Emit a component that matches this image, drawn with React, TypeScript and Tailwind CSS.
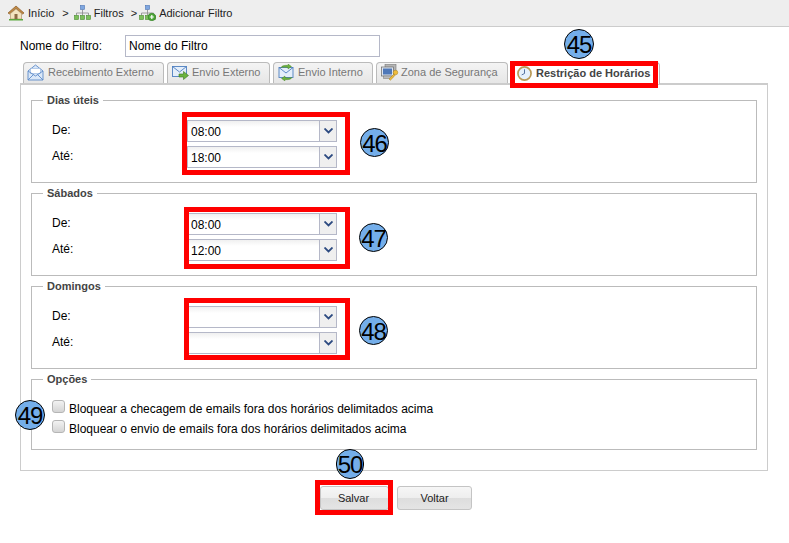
const font = "font-['Liberation_Sans',Arial,sans-serif]";

function HomeIcon() {
  return (
    <svg width="18" height="16" viewBox="0 0 18 16" className="shrink-0">
      <path d="M1 8 9 1l8 7-1.500 1L9 3.500 2.500 9z" fill="#c08a45" stroke="#8a5a25" strokeWidth="0.7" />
      <path d="M3.500 8.500 9 4l5.500 4.500V14h-11z" fill="#f3e3c0" stroke="#a98a5a" strokeWidth="0.6" />
      <rect x="7.500" y="9" width="3" height="5" fill="#8b6b45" />
      <rect x="2" y="14" width="14" height="1.500" fill="#5aa83c" />
    </svg>
  );
}

function TreeIcon({ plus }: { plus?: boolean }) {
  return (
    <svg width="17" height="16" viewBox="0 0 17 16" className="shrink-0">
      <rect x="6.500" y="0.500" width="4" height="4" fill="#7ea6e0" stroke="#4a74b5" strokeWidth="0.6" />
      <path d="M8.500 4.500V8M2.500 10.500V8h12v2.500M8.500 8v2.500" stroke="#888" strokeWidth="0.8" fill="none" />
      <rect x="0.500" y="10.500" width="4" height="4" fill="#7cc05a" stroke="#4c8a30" strokeWidth="0.6" />
      <rect x="6.500" y="10.500" width="4" height="4" fill="#7cc05a" stroke="#4c8a30" strokeWidth="0.6" />
      <rect x="12.500" y="10.500" width="4" height="4" fill="#7cc05a" stroke="#4c8a30" strokeWidth="0.6" />
      {plus && (
        <>
          <circle cx="12.800" cy="12" r="3.700" fill="#4fa83a" stroke="#2f7a22" strokeWidth="0.6" />
          <path d="M10.800 12h4M12.800 10v4" stroke="#fff" strokeWidth="1.200" />
        </>
      )}
    </svg>
  );
}

function MailOpenIcon() {
  return (
    <svg width="17" height="17" viewBox="0 0 17 17" className="shrink-0">
      <path d="M1 7 8.500 1 16 7v9H1z" fill="#dbe8f8" stroke="#5c8ac8" strokeWidth="0.9" />
      <rect x="3.500" y="4.500" width="10" height="5" fill="#fff" stroke="#8fb0dc" strokeWidth="0.6" />
      <path d="M1 7l7.500 5L16 7M1 16l5.500-5.500M16 16l-5.500-5.500" fill="none" stroke="#5c8ac8" strokeWidth="0.9" />
    </svg>
  );
}

function MailArrowIcon() {
  return (
    <svg width="17" height="15" viewBox="0 0 17 15" className="shrink-0">
      <rect x="0.500" y="1.500" width="14" height="10" fill="#e4eefa" stroke="#4f7fc0" strokeWidth="0.9" />
      <path d="M0.500 1.500 7.500 7l7-5.500" fill="none" stroke="#4f7fc0" strokeWidth="0.9" />
      <path d="M7 9h4.500V6.500L16.500 10.500l-5 4V12H7z" fill="#6cb33f" stroke="#3e7a22" strokeWidth="0.6" />
    </svg>
  );
}

function MailSwapIcon() {
  return (
    <svg width="17" height="17" viewBox="0 0 17 17" className="shrink-0">
      <rect x="1" y="3.500" width="14" height="10" fill="#e4eefa" stroke="#4f7fc0" strokeWidth="0.9" />
      <path d="M1 3.500 8 9l7-5.500" fill="none" stroke="#4f7fc0" strokeWidth="0.9" />
      <path d="M3 3.500C4 1.500 7 1 10 1.500V0l3.500 2.500L10 5V3.500C7.500 3 5 3 3 3.500z" fill="#6cb33f" stroke="#3e7a22" strokeWidth="0.4" />
      <path d="M14 13.500c-1 2-4 2.500-7 2V17l-3.500-2.500L7 12v1.500c2.500.5 5 .5 7 0z" fill="#6cb33f" stroke="#3e7a22" strokeWidth="0.4" />
    </svg>
  );
}

function SecurityIcon() {
  return (
    <svg width="18" height="17" viewBox="0 0 18 17" className="shrink-0">
      <rect x="4" y="0.500" width="11" height="9" fill="#b5b5b5" stroke="#777" strokeWidth="0.6" />
      <rect x="0.500" y="3" width="12" height="9" fill="#dfe6f0" stroke="#666" strokeWidth="0.7" />
      <rect x="2" y="4.500" width="9" height="6" fill="#4f78b8" />
      <rect x="2.500" y="12" width="8" height="2.500" fill="#bbb" stroke="#777" strokeWidth="0.5" />
      <circle cx="14.500" cy="8.500" r="2.300" fill="#eebc3c" stroke="#a8801c" strokeWidth="0.5" />
      <path d="M13 10 8 15l1.300 1.200 1.200-1.100 1-.9 2.700-3.300z" fill="#eebc3c" stroke="#a8801c" strokeWidth="0.5" />
    </svg>
  );
}

function ClockIcon() {
  return (
    <svg width="15" height="15" viewBox="0 0 16 16" className="shrink-0">
      <circle cx="8" cy="8" r="7" fill="#e5f0fb" stroke="#b99a58" strokeWidth="1.800" />
      <path d="M8 3.500V8l-3 1.500" fill="none" stroke="#4a6a9a" strokeWidth="1" />
    </svg>
  );
}

function Tab({ icon, label, className }: { icon: React.ReactNode; label: string; className: string }) {
  return (
    <div className={`${className} h-[21px] flex items-center pb-[1px] border border-b-0 border-[#bbbbbb] rounded-t-[4px] bg-gradient-to-b from-[#f4f4f4] to-[#e6e6e6] text-[11px] text-[#777777]`}>
      {icon}
      <span className="whitespace-nowrap">{label}</span>
    </div>
  );
}

function Combo({ value }: { value: string }) {
  return (
    <div className="w-[150px] h-[22px] flex border border-[#b5b8c8] bg-gradient-to-b from-[#f0f0f0] to-white to-[30%] text-[12px] text-black">
      <span className="flex-1 pl-[3px] leading-[22px]">{value}</span>
      <div className="w-[17px] flex items-center justify-center border-l border-[#b5b8c8] bg-[#efefef]">
        <svg width="9" height="6" viewBox="0 0 9 6">
          <path d="M0.500 0.500 4.500 4.500 8.500 0.500" fill="none" stroke="#2c4a80" strokeWidth="1.800" />
        </svg>
      </div>
    </div>
  );
}

function Section({ title, from, to }: { title: string; from: string; to: string }) {
  return (
    <fieldset className="border border-[#bbbbbb] h-[89px] pl-[20px] pt-[13px]">
      <legend className="-ml-[9px] px-[4px] text-[11px] font-bold text-[#444444] leading-[13px]">{title}</legend>
      <div className="flex items-center h-[22px] mb-[4px]">
        <span className="w-[135px] pb-[2px] text-[12px] text-black">De:</span>
        <Combo value={from} />
      </div>
      <div className="flex items-center h-[22px]">
        <span className="w-[135px] pb-[2px] text-[12px] text-black">Até:</span>
        <Combo value={to} />
      </div>
    </fieldset>
  );
}

function Check({ label }: { label: string }) {
  return (
    <div className="flex items-center h-[20px] gap-[4px]">
      <span className="relative -top-[3px] w-[13px] h-[13px] rounded-[3px] border border-[#b5b5b5] bg-gradient-to-b from-[#f2f2f2] to-[#d4d4d4]" />
      <span className="text-[12px] text-black whitespace-nowrap">{label}</span>
    </div>
  );
}

// numbered callouts and red boxes drawn on top of the screen
function Badge({ n, className }: { n: number; className: string }) {
  return (
    <div className={`absolute pt-[2px] rounded-full bg-[#74aeea] border border-black flex items-center justify-center text-[24px] tracking-[-1px] text-black ${className}`}>
      {n}
    </div>
  );
}

function RedBox({ className }: { className: string }) {
  return <div className={`absolute border-[5px] border-[#ff0000] ${className}`} />;
}

const buttonClass =
  "h-[24px] border border-[#c4c4c4] rounded-[3px] text-[11px] text-[#222222] bg-[linear-gradient(#f6f6f6_0%,#eeeeee_50%,#dddddd_50%,#e4e4e4_100%)]";

export default function App() {
  return (
    <div className={`relative w-[789px] h-[543px] bg-white overflow-hidden ${font}`}>
      <div className="h-[27px] flex items-center pl-[7px] bg-[#eeeeee] border-b border-[#cccccc] text-[11px] text-[#222222]">
        <HomeIcon />
        <span className="ml-[3px]">Início</span>
        <span className="ml-[8px]">&gt;</span>
        <span className="ml-[5px]"><TreeIcon /></span>
        <span className="ml-[3px]">Filtros</span>
        <span className="ml-[7px]">&gt;</span>
        <span className="ml-[2px]"><TreeIcon plus /></span>
        <span className="ml-[3px]">Adicionar Filtro</span>
      </div>

      <div className="px-[20px] pt-[8px]">
        <div className="flex items-center h-[22px]">
          <span className="w-[105px] text-[12px] text-black">Nome do Filtro:</span>
          <div className="w-[255px] h-[22px] pl-[3px] border border-[#b5b8c8] text-[12px] leading-[21px] text-black bg-white">Nome do Filtro</div>
        </div>

        <div className="flex items-end mt-[5px] pl-[3px] h-[21px]">
          <Tab icon={<MailOpenIcon />} label="Recebimento Externo" className="w-[141px] pl-[3px] gap-[4px]" />
          <Tab icon={<MailArrowIcon />} label="Envio Externo" className="w-[103px] ml-[3px] pl-[4px] gap-[3px]" />
          <Tab icon={<MailSwapIcon />} label="Envio Interno" className="w-[100px] ml-[3px] pl-[4px] gap-[3px]" />
          <Tab icon={<SecurityIcon />} label="Zona de Segurança" className="w-[132px] ml-[3px] pl-[4px] gap-[2px]" />
          <div className="w-[149px] h-[22px] ml-[3px] flex items-center gap-[4px] pl-[5px] pb-[1px] border border-b-0 border-[#bbbbbb] rounded-t-[4px] bg-white text-[11px] font-bold text-[#444444] relative top-[1px]">
            <ClockIcon />
            <span className="whitespace-nowrap">Restrição de Horários</span>
          </div>
        </div>

        <div className="w-[748px] h-[388px] border border-[#cccccc] border-t-2 px-[10px] flex flex-col gap-[4px] pt-[9px]">
          <Section title="Dias úteis" from="08:00" to="18:00" />
          <Section title="Sábados" from="08:00" to="12:00" />
          <Section title="Domingos" from="" to="" />
          <fieldset className="border border-[#bbbbbb] h-[77px] pl-[20px] pt-[13px]">
            <legend className="-ml-[9px] px-[4px] text-[11px] font-bold text-[#444444] leading-[13px]">Opções</legend>
            <Check label="Bloquear a checagem de emails fora dos horários delimitados acima" />
            <Check label="Bloquear o envio de emails fora dos horários delimitados acima" />
          </fieldset>
        </div>

        <div className="flex gap-[8px] mt-[15px] pl-[300px]">
          <button className={`w-[69px] pr-[2px] ${buttonClass}`}>Salvar</button>
          <button className={`w-[75px] ${buttonClass}`}>Voltar</button>
        </div>
      </div>

      <RedBox className="left-[510px] top-[61px] w-[148px] h-[27px]" />
      <RedBox className="left-[182px] top-[112px] w-[168px] h-[63px]" />
      <RedBox className="left-[184px] top-[207px] w-[166px] h-[62px]" />
      <RedBox className="left-[184px] top-[298px] w-[166px] h-[62px]" />
      <RedBox className="left-[315px] top-[480px] w-[78px] h-[35px]" />

      <Badge n={45} className="w-[30px] h-[30px] left-[564px] top-[29px]" />
      <Badge n={46} className="w-[29px] h-[29px] left-[360px] top-[128px]" />
      <Badge n={47} className="w-[29px] h-[29px] left-[359px] top-[223px]" />
      <Badge n={48} className="w-[29px] h-[29px] left-[359px] top-[316px]" />
      <Badge n={49} className="w-[30px] h-[30px] left-[15px] top-[400px]" />
      <Badge n={50} className="w-[28px] h-[30px] left-[336px] top-[449px]" />
    </div>
  );
}
